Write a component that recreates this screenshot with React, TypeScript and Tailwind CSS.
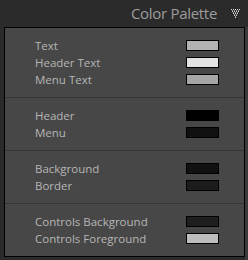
import React from 'react'

type Row = { label: string; color: string }

const sections: Row[][] = [
  [
    { label: 'Text', color: '#b3b3b3' },
    { label: 'Header Text', color: '#e3e3e3' },
    { label: 'Menu Text', color: '#a6a6a6' },
  ],
  [
    { label: 'Header', color: '#000000' },
    { label: 'Menu', color: '#111111' },
  ],
  [
    { label: 'Background', color: '#111111' },
    { label: 'Border', color: '#1c1c1c' },
  ],
  [
    { label: 'Controls Background', color: '#1e1e1e' },
    { label: 'Controls Foreground', color: '#bdbdbd' },
  ],
]

const Collapse = () => (
  <svg width="10" height="9" viewBox="0 0 10 9" className="block">
    {[0, 1, 2, 3, 4].map((r) =>
      Array.from({ length: 5 - r }).map((_, i) => (
        <rect key={`${r}-${i}`} x={r + i * 2} y={r * 2} width="1" height="1" fill="#dcdcdc" />
      ))
    )}
    {[0, 1, 2, 3].map((r) =>
      Array.from({ length: 4 - r }).map((_, i) => (
        <rect key={`b${r}-${i}`} x={r + 1 + i * 2} y={r * 2 + 1} width="1" height="1" fill="#8a8a8a" />
      ))
    )}
  </svg>
)

export default function App() {
  return (
    <div className="w-[248px] h-[260px] bg-[#2b2b2b] flex flex-col font-['Open_Sans',sans-serif] overflow-hidden">
      {/* Header */}
      <div className="h-[27px] flex items-center justify-end pr-[7px]">
        <span className="text-[15px] text-[#9d9d9d] tracking-[-0.3px] mr-[14px] leading-none">Color Palette</span>
        <Collapse />
      </div>

      <div className="flex flex-1">
        <div className="w-[4px]" />
        {/* Panel */}
        <div className="w-[241px] h-[230px] border border-black bg-[#474747] flex flex-col">
          {sections.map((rows, s) => (
            <div
              key={s}
              className={`flex flex-col py-[9px] ${s > 0 ? 'border-t border-[#363636] h-[53px]' : 'h-[69px]'}`}
            >
              {rows.map((row) => (
                <div key={row.label} className="h-[17px] flex items-center justify-between pl-[30px] pr-[25px]">
                  <span className="text-[11.5px] text-[#b6b6b6] leading-none">{row.label}</span>
                  <span className="w-[33px] h-[11px] border border-black" style={{ backgroundColor: row.color }} />
                </div>
              ))}
            </div>
          ))}
        </div>
        <div className="w-[3px] bg-[#3b3b3b]" />
      </div>
    </div>
  )
}
